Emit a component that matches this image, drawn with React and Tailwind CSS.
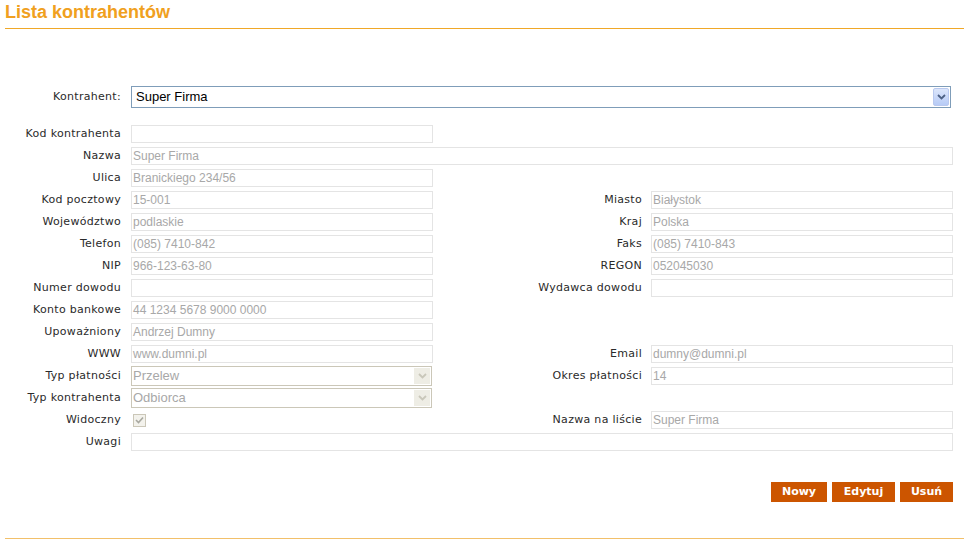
import React from "react";

const label = "shrink-0 text-right text-[11px] tracking-[0.3px] text-[#2a2a2a] font-['DejaVu_Sans',Verdana,sans-serif] whitespace-nowrap";

function Field({ value = "", wide = false }) {
  return (
    <div
      className={`h-[18px] shrink-0 border border-[#e4e4e4] bg-white px-[1px] text-[12px] leading-[16px] text-[#a8a8a8] font-['Liberation_Sans',Arial,sans-serif] ${
        wide ? "w-[822px]" : "w-[302px]"
      }`}
    >
      {value}
    </div>
  );
}

function Chevron({ color }) {
  return (
    <svg width="9" height="6" viewBox="0 0 9 6">
      <path d="M1 1 L4.5 4.5 L8 1" fill="none" stroke={color} strokeWidth="1.8" />
    </svg>
  );
}

function DisabledSelect({ value }) {
  return (
    <div className="flex h-[20px] w-[301px] items-center border border-[#cbc7b8] bg-white text-[13px] text-[#a8a8a8] font-['Liberation_Sans',Arial,sans-serif]">
      <span className="flex-1 pl-[1px]">{value}</span>
      <div className="mr-[1px] flex h-[16px] w-[16px] items-center justify-center bg-[#eeede5]">
        <Chevron color="#c9c7ba" />
      </div>
    </div>
  );
}

function Row({ left, right }) {
  return (
    <div className="flex h-[22px] items-center">
      <div className="flex min-w-[428px] shrink-0 items-center gap-[10px]">
        <div className={`${label} w-[116px]`}>{left[0]}</div>
        {left[1]}
      </div>
      {right && (
        <div className="flex items-center">
          <div className={`${label} w-[209px]`}>{right[0]}</div>
          <div className="ml-[9px]">{right[1]}</div>
        </div>
      )}
    </div>
  );
}

export default function App() {
  return (
    <div className="h-[544px] w-[969px] bg-white px-[5px] pt-[1px]">
      <div className="h-[28px] border-b border-[#f0a828]">
        <h1 className="text-[18px] font-bold leading-[22px] text-[#f0a020] font-['Liberation_Sans',Arial,sans-serif]">
          Lista kontrahentów
        </h1>
      </div>

      <div className="mt-[57px] flex items-center gap-[10px]">
        <div className={`${label} w-[116px]`}>Kontrahent:</div>
        <div className="flex h-[22px] w-[820px] items-center border border-[#7f9db9] bg-white text-[13px] text-black font-['Liberation_Sans',Arial,sans-serif]">
          <span className="flex-1 pl-[4px]">Super Firma</span>
          <div className="mr-[1px] flex h-[18px] w-[16px] items-center justify-center rounded-[2px] bg-gradient-to-b from-[#dce6fb] to-[#b7cbf6] border border-[#b9c9ef]">
            <Chevron color="#4d6185" />
          </div>
        </div>
      </div>

      <div className="mt-[15px]">
        <Row left={["Kod kontrahenta", <Field />]} />
        <Row left={["Nazwa", <Field value="Super Firma" wide />]} />
        <Row left={["Ulica", <Field value="Branickiego 234/56" />]} />
        <Row left={["Kod pocztowy", <Field value="15-001" />]} right={["Miasto", <Field value="Białystok" />]} />
        <Row left={["Województwo", <Field value="podlaskie" />]} right={["Kraj", <Field value="Polska" />]} />
        <Row left={["Telefon", <Field value="(085) 7410-842" />]} right={["Faks", <Field value="(085) 7410-843" />]} />
        <Row left={["NIP", <Field value="966-123-63-80" />]} right={["REGON", <Field value="052045030" />]} />
        <Row left={["Numer dowodu", <Field />]} right={["Wydawca dowodu", <Field />]} />
        <Row left={["Konto bankowe", <Field value="44 1234 5678 9000 0000" />]} />
        <Row left={["Upoważniony", <Field value="Andrzej Dumny" />]} />
        <Row left={["WWW", <Field value="www.dumni.pl" />]} right={["Email", <Field value="dumny@dumni.pl" />]} />
        <Row left={["Typ płatności", <DisabledSelect value="Przelew" />]} right={["Okres płatności", <Field value="14" />]} />
        <Row left={["Typ kontrahenta", <DisabledSelect value="Odbiorca" />]} />
        <Row
          left={[
            "Widoczny",
            <div className="ml-[2px] flex h-[13px] w-[13px] items-center justify-center border border-[#cbc7b8] bg-[#f3f2ec]">
              <svg width="9" height="9" viewBox="0 0 9 9">
                <path d="M1 4 L3.5 6.5 L8 1.5" fill="none" stroke="#a8a8a0" strokeWidth="1.6" />
              </svg>
            </div>,
          ]}
          right={["Nazwa na liście", <Field value="Super Firma" />]}
        />
        <Row left={["Uwagi", <Field wide />]} />
      </div>

      <div className="mt-[29px] flex justify-end gap-[5px] pr-[11px]">
        {[
          ["Nowy", "w-[56px]"],
          ["Edytuj", "w-[63px]"],
          ["Usuń", "w-[53px]"],
        ].map(([t, w]) => (
          <button
            key={t}
            className={`${w} h-[20px] bg-[#cc5500] text-[11px] font-bold text-white font-['DejaVu_Sans',Verdana,sans-serif]`}
          >
            {t}
          </button>
        ))}
      </div>

      <div className="mt-[36px] border-b border-[#f2c06a]" />
    </div>
  );
}
